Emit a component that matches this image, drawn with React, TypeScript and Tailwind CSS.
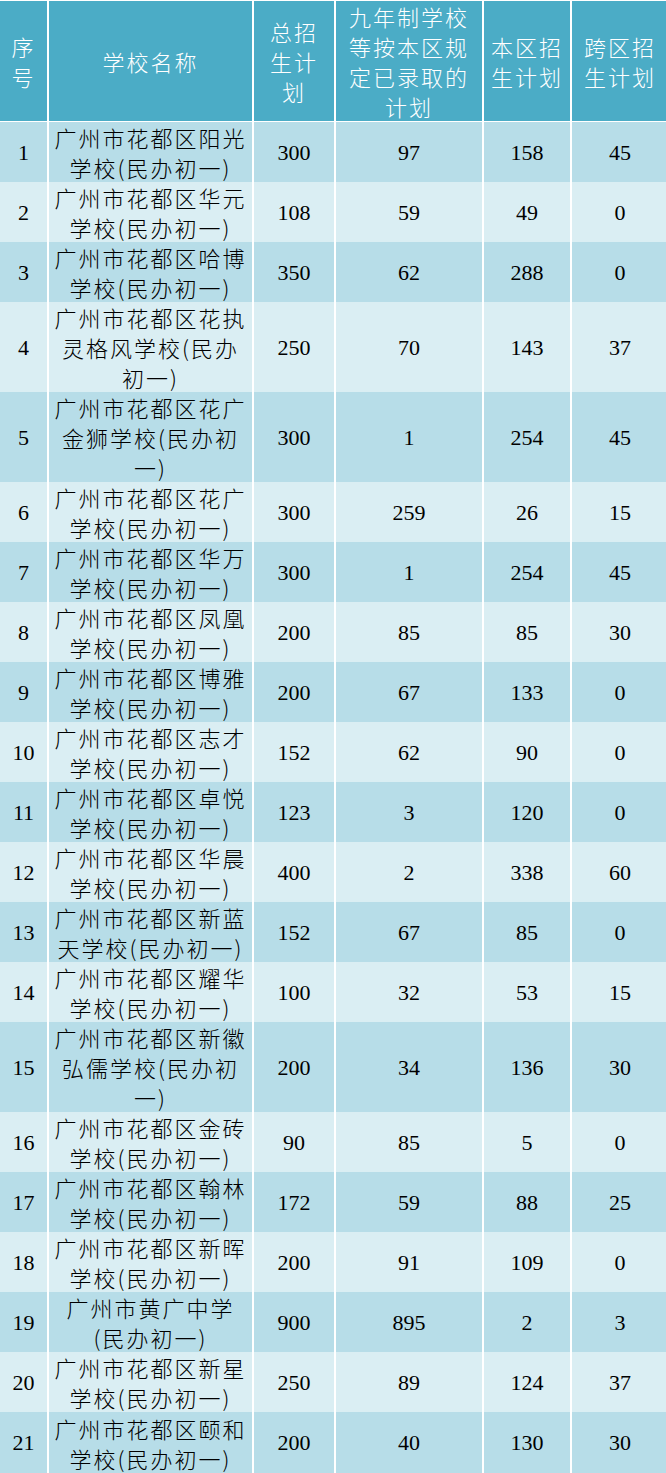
import React from 'react';

interface Row {
  no: number;
  name: string[];
  total: number;
  admitted: number;
  local: number;
  cross: number;
}

const rows: Row[] = [
  { no: 1, name: ['广州市花都区阳光', '学校(民办初一)'], total: 300, admitted: 97, local: 158, cross: 45 },
  { no: 2, name: ['广州市花都区华元', '学校(民办初一)'], total: 108, admitted: 59, local: 49, cross: 0 },
  { no: 3, name: ['广州市花都区哈博', '学校(民办初一)'], total: 350, admitted: 62, local: 288, cross: 0 },
  { no: 4, name: ['广州市花都区花执', '灵格风学校(民办', '初一)'], total: 250, admitted: 70, local: 143, cross: 37 },
  { no: 5, name: ['广州市花都区花广', '金狮学校(民办初', '一)'], total: 300, admitted: 1, local: 254, cross: 45 },
  { no: 6, name: ['广州市花都区花广', '学校(民办初一)'], total: 300, admitted: 259, local: 26, cross: 15 },
  { no: 7, name: ['广州市花都区华万', '学校(民办初一)'], total: 300, admitted: 1, local: 254, cross: 45 },
  { no: 8, name: ['广州市花都区凤凰', '学校(民办初一)'], total: 200, admitted: 85, local: 85, cross: 30 },
  { no: 9, name: ['广州市花都区博雅', '学校(民办初一)'], total: 200, admitted: 67, local: 133, cross: 0 },
  { no: 10, name: ['广州市花都区志才', '学校(民办初一)'], total: 152, admitted: 62, local: 90, cross: 0 },
  { no: 11, name: ['广州市花都区卓悦', '学校(民办初一)'], total: 123, admitted: 3, local: 120, cross: 0 },
  { no: 12, name: ['广州市花都区华晨', '学校(民办初一)'], total: 400, admitted: 2, local: 338, cross: 60 },
  { no: 13, name: ['广州市花都区新蓝', '天学校(民办初一)'], total: 152, admitted: 67, local: 85, cross: 0 },
  { no: 14, name: ['广州市花都区耀华', '学校(民办初一)'], total: 100, admitted: 32, local: 53, cross: 15 },
  { no: 15, name: ['广州市花都区新徽', '弘儒学校(民办初', '一)'], total: 200, admitted: 34, local: 136, cross: 30 },
  { no: 16, name: ['广州市花都区金砖', '学校(民办初一)'], total: 90, admitted: 85, local: 5, cross: 0 },
  { no: 17, name: ['广州市花都区翰林', '学校(民办初一)'], total: 172, admitted: 59, local: 88, cross: 25 },
  { no: 18, name: ['广州市花都区新晖', '学校(民办初一)'], total: 200, admitted: 91, local: 109, cross: 0 },
  { no: 19, name: ['广州市黄广中学', '(民办初一)'], total: 900, admitted: 895, local: 2, cross: 3 },
  { no: 20, name: ['广州市花都区新星', '学校(民办初一)'], total: 250, admitted: 89, local: 124, cross: 37 },
  { no: 21, name: ['广州市花都区颐和', '学校(民办初一)'], total: 200, admitted: 40, local: 130, cross: 30 },
];

const cjk = "font-['Noto_Sans_CJK_SC',sans-serif] font-light";
const num = "font-['Liberation_Serif','Noto_Sans_CJK_SC',serif]";

function Lines({ lines }: { lines: string[] }) {
  return (
    <div className={`${cjk} text-[22px] leading-[30px] tracking-[2px] text-center whitespace-nowrap`}>
      {lines.map((l, i) => (
        <div key={i}>{l}</div>
      ))}
    </div>
  );
}

export default function App() {
  return (
    <div className="w-[666px] h-[1473px] bg-white overflow-hidden">
      {/* header */}
      <div className="grid grid-cols-[47px_203px_80px_146px_86px_96px] gap-x-[2px] h-[118px] mt-[1px] mb-[3px] text-white">
        <div className="bg-[#4bacc6] flex items-center justify-center">
          <Lines lines={['序', '号']} />
        </div>
        <div className="bg-[#4bacc6] flex items-center justify-center">
          <Lines lines={['学校名称']} />
        </div>
        <div className="bg-[#4bacc6] flex items-center justify-center">
          <Lines lines={['总招', '生计', '划']} />
        </div>
        <div className="bg-[#4bacc6] flex items-center justify-center">
          <Lines lines={['九年制学校', '等按本区规', '定已录取的', '计划']} />
        </div>
        <div className="bg-[#4bacc6] flex items-center justify-center">
          <Lines lines={['本区招', '生计划']} />
        </div>
        <div className="bg-[#4bacc6] flex items-center justify-center">
          <Lines lines={['跨区招', '生计划']} />
        </div>
      </div>

      {/* body */}
      <div className="flex flex-col gap-y-[2px]">
        {rows.map((r, i) => {
          const bg = i % 2 === 0 ? 'bg-[#b7dde8]' : 'bg-[#daeef3]';
          const last = i === rows.length - 1;
          const h = last ? 'h-[61px]' : r.name.length === 3 ? 'h-[88px]' : 'h-[58px]';
          const cell = `${bg} flex items-center justify-center`;
          const n = `${num} text-[22px] text-black`;
          return (
            <div key={r.no} className={`grid grid-cols-[47px_203px_80px_146px_86px_96px] gap-x-[2px] ${h}`}>
              <div className={cell}>
                <span className={n}>{r.no}</span>
              </div>
              <div className={`${cell} text-black`}>
                <Lines lines={r.name} />
              </div>
              <div className={cell}>
                <span className={n}>{r.total}</span>
              </div>
              <div className={cell}>
                <span className={n}>{r.admitted}</span>
              </div>
              <div className={cell}>
                <span className={n}>{r.local}</span>
              </div>
              <div className={cell}>
                <span className={n}>{r.cross}</span>
              </div>
            </div>
          );
        })}
      </div>
    </div>
  );
}
